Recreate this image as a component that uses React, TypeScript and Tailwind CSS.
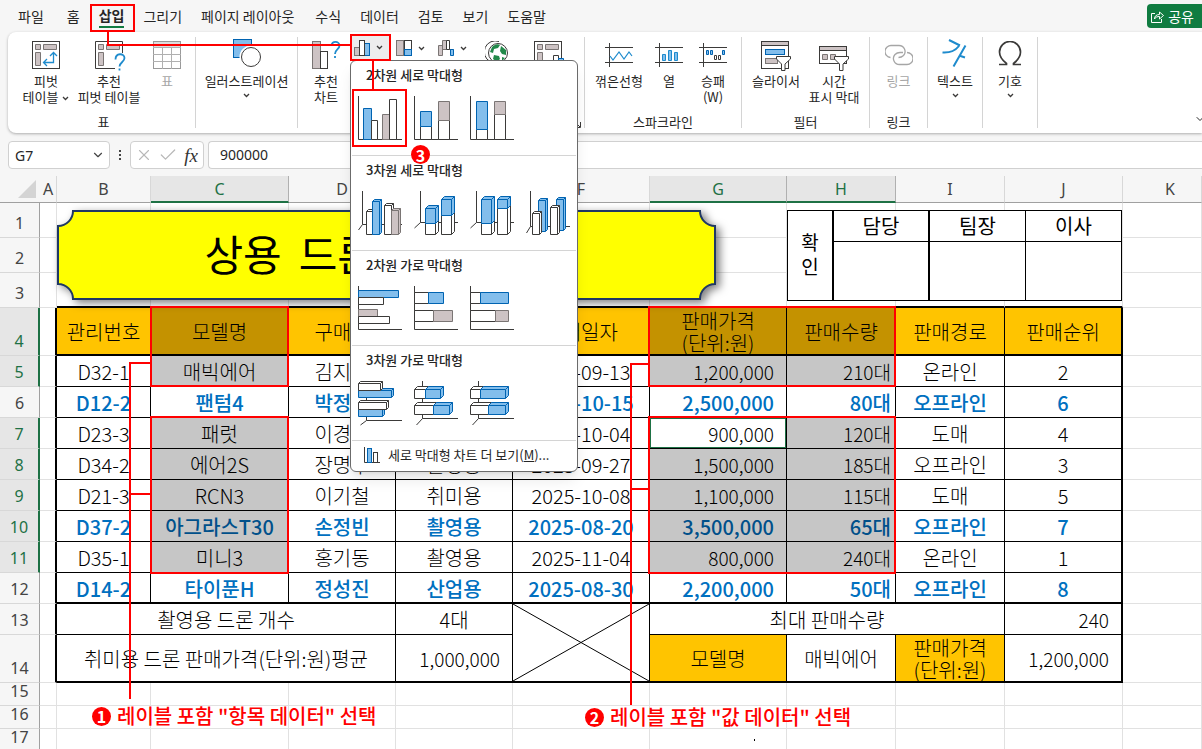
import type { ReactNode } from 'react'
import clsx from 'clsx'
import { Check, ChevronDown, X } from 'lucide-react'

const DARK = '#3b3a39'
const BLUE = '#0063b1'
const SKY = '#83beec'
const GRAY = '#cdc3c4'
const GRAY_LINE = '#7a7574'

type Tone = 'blue' | 'white' | 'gray'

const TONES: Record<Tone, { fill: string; stroke: string }> = {
  blue: { fill: SKY, stroke: BLUE },
  white: { fill: '#ffffff', stroke: DARK },
  gray: { fill: GRAY, stroke: GRAY_LINE },
}

// [x, y, width, height, tone]
type Bar = [number, number, number, number, Tone]

interface ChartIcon {
  label: string
  axis: string
  bars: Bar[]
  depth?: number
}

interface ChartSection {
  title: string
  icons: ChartIcon[]
}

const FLAT_AXIS = 'M0.5 0V43.5H44'

const CHART_SECTIONS: ChartSection[] = [
  {
    title: '2차원 세로 막대형',
    icons: [
      { label: '묶은 세로 막대형', axis: FLAT_AXIS, bars: [[5, 12, 8, 31, 'blue'], [13, 24, 6, 19, 'white'], [24, 18, 7, 25, 'gray'], [31, 3, 7, 40, 'white']] },
      { label: '누적 세로 막대형', axis: FLAT_AXIS, bars: [[6, 30, 11, 13, 'white'], [6, 15, 11, 15, 'blue'], [24, 24, 11, 19, 'white'], [24, 5, 11, 19, 'gray']] },
      { label: '100% 기준 누적 세로 막대형', axis: FLAT_AXIS, bars: [[6, 33, 11, 10, 'white'], [6, 5, 11, 28, 'blue'], [24, 18, 11, 25, 'white'], [24, 5, 11, 13, 'gray']] },
    ],
  },
  {
    title: '3차원 세로 막대형',
    icons: [
      { label: '3차원 묶은 세로 막대형', depth: 2, axis: 'M4.5 0V33.5H44M4.5 33.5L0.5 39', bars: [[8, 20, 6, 23, 'white'], [14, 10, 7, 33, 'blue'], [26, 14, 7, 29, 'white'], [33, 19, 7, 24, 'gray']] },
      { label: '3차원 누적 세로 막대형', depth: 3, axis: 'M6.5 0V31.5H44M6.5 31.5L0.5 37', bars: [[11, 32, 10, 11, 'white'], [11, 17, 10, 15, 'blue'], [27, 24, 10, 19, 'white'], [27, 8, 10, 16, 'blue']] },
      { label: '3차원 100% 기준 누적 세로 막대형', depth: 3, axis: 'M6.5 0V31.5H44M6.5 31.5L0.5 37', bars: [[11, 32, 10, 11, 'white'], [11, 8, 10, 24, 'blue'], [27, 17, 10, 26, 'white'], [27, 8, 10, 9, 'blue']] },
      { label: '3차원 세로 막대형', depth: 2, axis: 'M4.5 0V35.5H44M4.5 35.5L0.5 42', bars: [[12, 9, 7, 31, 'blue'], [6, 22, 7, 21, 'white'], [30, 8, 7, 31, 'blue'], [24, 16, 7, 27, 'white']] },
    ],
  },
  {
    title: '2차원 가로 막대형',
    icons: [
      { label: '묶은 가로 막대형', axis: FLAT_AXIS, bars: [[0, 4, 40, 7, 'blue'], [0, 11, 25, 7, 'white'], [0, 23, 19, 7, 'gray'], [0, 30, 31, 7, 'white']] },
      { label: '누적 가로 막대형', axis: FLAT_AXIS, bars: [[0, 6, 14, 11, 'white'], [14, 6, 15, 11, 'blue'], [0, 24, 19, 11, 'white'], [19, 24, 19, 11, 'gray']] },
      { label: '100% 기준 누적 가로 막대형', axis: FLAT_AXIS, bars: [[0, 6, 10, 11, 'white'], [10, 6, 28, 11, 'blue'], [0, 24, 25, 11, 'white'], [25, 24, 13, 11, 'gray']] },
    ],
  },
  {
    title: '3차원 가로 막대형',
    icons: [
      { label: '3차원 묶은 가로 막대형', depth: 2, axis: 'M8.5 0V39.5H44M8.5 39.5L2.5 44', bars: [[0, 28, 24, 7, 'blue'], [0, 21, 28, 7, 'white'], [0, 9, 33, 7, 'blue'], [0, 2, 22, 7, 'white']] },
      { label: '3차원 누적 가로 막대형', depth: 3, axis: 'M8.5 0V37.5H44M8.5 37.5L2.5 44', bars: [[0, 8, 11, 9, 'white'], [11, 8, 15, 9, 'blue'], [0, 24, 19, 9, 'white'], [19, 24, 16, 9, 'blue']] },
      { label: '3차원 100% 기준 누적 가로 막대형', depth: 3, axis: 'M8.5 0V37.5H44M8.5 37.5L2.5 44', bars: [[0, 8, 10, 9, 'white'], [10, 8, 25, 9, 'blue'], [0, 24, 18, 9, 'white'], [18, 24, 17, 9, 'blue']] },
    ],
  },
]

function ChartTile({ icon }: { icon: ChartIcon }) {
  const d = icon.depth ?? 0
  return (
    <svg width="44" height="44" viewBox="0 0 44 44" fill="none" className="overflow-visible">
      <path d={icon.axis} stroke={DARK} />
      {icon.bars.map(([x, y, w, h, tone], i) => {
        const { fill, stroke } = TONES[tone]
        const left = x + 0.5
        const top = y + 0.5
        return (
          <g key={i} fill={fill} stroke={stroke} strokeLinejoin="round">
            {d > 0 && <path d={`M${left} ${top}l${d} ${-d}h${w}v${h}l${-d} ${d}M${left + w} ${top}l${d} ${-d}`} />}
            <rect x={left} y={top} width={w} height={h} />
          </g>
        )
      })}
    </svg>
  )
}

function Caret({ className }: { className?: string }) {
  return (
    <svg width="7" height="5" viewBox="0 0 7 5" fill="none" stroke={DARK} strokeWidth="1.3" className={clsx('inline-block', className)}>
      <path d="M1 1l2.5 2.5L6 1" />
    </svg>
  )
}

/* ---------- ribbon icons ---------- */

const PivotIcon = () => (
  <svg width="28" height="28" viewBox="0 0 28 28" fill={GRAY} stroke={GRAY_LINE}>
    <rect x="0.5" y="0.5" width="27" height="27" fill="#fff" stroke={DARK} />
    <path d="M3.5 3.5h5v5h-5zM11.5 3.5h13v5h-13zM3.5 11.5h5v13h-5z" />
    <path d="M12 21.5h9.5V12M15 18l-3.5 3.5L15 25M18 15l3.5-3.5L25 15" fill="none" stroke="#1e8bcd" strokeWidth="1.3" />
  </svg>
)

const RecommendPivotIcon = () => (
  <svg width="28" height="28" viewBox="0 0 28 28" fill={GRAY} stroke={GRAY_LINE} className="overflow-visible">
    <path d="M20 27.5H0.5V0.5h27V12" fill="#fff" stroke={DARK} />
    <path d="M3.5 3.5h5v5h-5zM11.5 3.5h13v5h-13zM3.5 11.5h5v13h-5z" />
    <path d="M20.5 18.5c0-7 9-6.5 9-1.5 0 4-5 4.5-5 8.5M24.5 27.5v2" fill="none" stroke="#1e8bcd" strokeWidth="1.8" />
  </svg>
)

const TableIcon = () => (
  <svg width="28" height="28" viewBox="0 0 28 28" fill="none" stroke="#b0b0b0">
    <rect x="0.5" y="0.5" width="27" height="27" fill="#fff" stroke="#9a9a9a" />
    <rect x="1" y="1" width="26" height="5" fill="#dedede" stroke="none" />
    <path d="M0 6.5h28M0 13.5h28M0 20.5h28M9.5 6v22M18.5 6v22" />
  </svg>
)

const ShapesIcon = () => (
  <svg width="28" height="28" viewBox="0 0 28 28" className="overflow-visible">
    <rect x="0.5" y="-1.5" width="18" height="18" fill={SKY} stroke={BLUE} />
    <circle cx="18" cy="16" r="11.5" fill="#fff" />
    <circle cx="18" cy="16" r="9.5" fill="#fff" stroke={DARK} />
  </svg>
)

const RecommendChartIcon = () => (
  <svg width="28" height="28" viewBox="0 0 28 28" fill="none" className="overflow-visible">
    <rect x="0.5" y="0.5" width="8" height="27" fill={GRAY} stroke={GRAY_LINE} />
    <rect x="8.5" y="10.5" width="7" height="17" fill="#fff" stroke={DARK} />
    <path d="M19.5 5c0-6 8-5 8-0.5 0 4-4.5 4-4.5 8.5M23 15v2" stroke="#1e8bcd" strokeWidth="1.8" />
  </svg>
)

const ColumnSmallIcon = () => (
  <svg width="16" height="16" viewBox="0 0 16 16">
    <rect x="0.5" y="7.5" width="5" height="8" fill={GRAY} stroke={GRAY_LINE} />
    <rect x="10.5" y="3.5" width="5" height="12" fill={SKY} stroke={BLUE} />
    <rect x="5.5" y="0.5" width="5" height="15" fill="#fff" stroke={DARK} />
  </svg>
)

const TreemapSmallIcon = () => (
  <svg width="16" height="16" viewBox="0 0 16 16">
    <rect x="8.5" y="0.5" width="7" height="9" fill="#fff" stroke={DARK} />
    <rect x="0.5" y="0.5" width="7" height="15" fill={GRAY} stroke={GRAY_LINE} />
    <rect x="8.5" y="9.5" width="7" height="6" fill={SKY} stroke={BLUE} />
  </svg>
)

const WaterfallSmallIcon = () => (
  <svg width="16" height="16" viewBox="0 0 16 16">
    <path d="M0.5 5.5h4v10h-4zM4.5 0.5h4v9h-4z" fill={GRAY} stroke={GRAY_LINE} />
    <path d="M8.5 0.5h3v9h-3z" fill="#fff" stroke={DARK} />
    <path d="M11.5 9.5h4" stroke={DARK} />
    <path d="M12.5 9.5h3v6h-3z" fill={SKY} stroke={BLUE} />
  </svg>
)

const GlobeIcon = () => (
  <svg width="24" height="28" viewBox="0 0 24 28" fill="none">
    <path d="M14 0.5a11 11 0 0 0-9 20" stroke={DARK} />
    <circle cx="13" cy="12" r="9.5" fill="#fff" stroke={DARK} />
    <path d="M7 6c3-3 6-3.5 8-2l-2 3-4 1-1 4-3-1zM16 5l5 4v5l-4-1-2-3zM9 14l5 1 1 3-3 3-4-3zM17 16l3 1-3 3z" fill="#22894a" />
  </svg>
)

const PivotChartIcon = () => (
  <svg width="30" height="28" viewBox="0 0 30 28" fill={GRAY} stroke={GRAY_LINE}>
    <rect x="0.5" y="0.5" width="27" height="27" fill="#fff" stroke={DARK} />
    <path d="M3.5 3.5h5v5h-5zM11.5 3.5h13v5h-13zM3.5 11.5h5v13h-5z" />
    <path d="M19.5 14.5h5v12h-5z" fill="#fff" stroke={DARK} />
    <path d="M24.5 17.5h5v9h-5z" fill={SKY} stroke={BLUE} />
  </svg>
)

const SparkFrame = ({ children }: { children: ReactNode }) => (
  <svg width="28" height="28" viewBox="0 0 28 28" fill="none">
    <path d="M0 6.5h28M0 21.5h28M4.5 2v24" stroke={DARK} />
    {children}
  </svg>
)

const SparkLineIcon = () => (
  <SparkFrame>
    <path d="M5 15l3 4 6-8 5 7 5-7 3 4" stroke="#1e8bcd" strokeWidth="1.2" />
  </SparkFrame>
)

const SparkColumnIcon = () => (
  <SparkFrame>
    <path d="M7.5 13.5h3v6h-3zM13.5 9.5h3v10h-3zM19.5 11.5h3v8h-3z" fill={SKY} stroke="#1e8bcd" />
  </SparkFrame>
)

const SparkWinIcon = () => (
  <SparkFrame>
    <path d="M7.5 9.5h2v4h-2zM11.5 9.5h2v4h-2zM23.5 9.5h2v4h-2z" fill={SKY} stroke={BLUE} />
    <path d="M15.5 14.5h2v4h-2zM19.5 14.5h2v4h-2z" fill="#fff" stroke={DARK} />
  </SparkFrame>
)

const SlicerIcon = () => (
  <svg width="30" height="30" viewBox="0 0 30 30" className="overflow-visible">
    <rect x="0.5" y="0.5" width="27" height="27" fill="#fff" stroke={DARK} />
    <rect x="0.5" y="0.5" width="27" height="4" fill={GRAY} stroke={DARK} />
    <rect x="4.5" y="8.5" width="19" height="5" fill={SKY} stroke={BLUE} />
    <rect x="4.5" y="17.5" width="12" height="5" fill={GRAY} stroke={GRAY_LINE} />
    <path d="M15.5 15.5h14v2.5l-5.5 5v6.5h-3.500V23l-5-5z" fill="#fff" stroke={DARK} />
  </svg>
)

const TimelineIcon = () => (
  <svg width="30" height="30" viewBox="0 0 30 30" className="overflow-visible">
    <rect x="0.5" y="5.5" width="27" height="17" fill="#fff" stroke={DARK} />
    <rect x="0.5" y="5.5" width="27" height="4" fill={GRAY} stroke={DARK} />
    <path d="M3.5 13.5h5v5h-5zM11.5 13.5h5v5h-5z" fill={GRAY} stroke={GRAY_LINE} />
    <path d="M15.5 15.5h14v2.5l-5.5 5v6.5h-3.500V23l-5-5z" fill="#fff" stroke={DARK} />
  </svg>
)

const LinkIcon = () => (
  <svg width="28" height="28" viewBox="0 0 28 28" fill="none" stroke="#a6a6a6" strokeWidth="1.3">
    <path d="M5.500 16.500a6 6 0 0 1 1-12h7.500a6 6 0 0 1 4.500 10q-2 2-5 2" />
    <path d="M22 11.500a6 6 0 0 1 0 12h-7.500a6 6 0 0 1-4.500-10q2-2 5-2h3" />
  </svg>
)

const TextIcon = () => (
  <svg width="28" height="28" viewBox="0 0 28 28" fill="none" stroke="#1e8bcd" strokeWidth="2" className="overflow-visible">
    <path d="M8 -1l11 5.5M18 5C14 10 9 12 1.5 11.5M24.5 4.500L12.5 25.5M18 14.5l6 2" />
  </svg>
)

const OmegaIcon = () => (
  <svg width="28" height="28" viewBox="0 0 28 28" fill="none" stroke={DARK} strokeWidth="1.7">
    <path d="M3 23.5h7.5v-1C6 19 3.500 16 3.500 11a10.500 10.500 0 0 1 21 0c0 5-2.500 8-7 11.500v1H25" />
  </svg>
)

/* ---------- ribbon ---------- */

interface ToolProps {
  icon: ReactNode
  lines: string[]
  className: string
  caret?: 'inline' | 'below'
  disabled?: boolean
}

function Tool({ icon, lines, className, caret, disabled }: ToolProps) {
  return (
    <button type="button" disabled={disabled} className={clsx('flex flex-col items-center text-[13px] leading-4 whitespace-nowrap', disabled && 'text-[#a6a6a6]', className)}>
      <span className="mb-1 flex h-7 justify-center">{icon}</span>
      {lines.map((line, i) => (
        <span key={line}>
          {line}
          {caret === 'inline' && i === lines.length - 1 && <Caret className="ml-1 align-middle" />}
        </span>
      ))}
      {caret === 'below' && <Caret className="mt-1" />}
    </button>
  )
}

function Group({ label, className, children }: { label?: string; className: string; children: ReactNode }) {
  return (
    <div className={clsx('flex h-[91px] shrink-0 flex-col justify-between border-r border-[#d4d4d4] pt-1', className)}>
      <div className="flex items-start">{children}</div>
      {label && <div className="text-center text-[13px] leading-3">{label}</div>}
    </div>
  )
}

function ChartMenu() {
  return (
    <div role="menu" className="absolute top-[26px] left-0 z-20 w-[228px] rounded-md border border-[#6b6b6b] bg-white shadow-lg">
      {CHART_SECTIONS.map((section) => (
        <section key={section.title} className="mx-px border-b border-[#d4d4d4] pb-2">
          <h3 className="pl-3.5 text-[13px] leading-7 font-medium">{section.title}</h3>
          <div className="flex">
            {section.icons.map((icon) => (
              <button key={icon.label} type="button" role="menuitem" aria-label={icon.label} className="flex h-[58px] w-14 items-center justify-center">
                <ChartTile icon={icon} />
              </button>
            ))}
          </div>
        </section>
      ))}
      <button type="button" role="menuitem" className="flex h-[30px] w-full items-center gap-2 pb-0.5 pl-3 text-[13px]">
        <svg width="17" height="17" viewBox="0 0 17 17" fill="none">
          <path d="M1.5 0v15.5H17" stroke={DARK} />
          <rect x="4.5" y="1.5" width="4" height="14" fill={SKY} stroke={BLUE} />
          <rect x="10.5" y="5.5" width="4" height="10" fill="#fff" stroke={DARK} />
        </svg>
        <span>
          세로 막대형 차트 더 보기(<u>M</u>)...
        </span>
      </button>
    </div>
  )
}

const TABS = ['파일', '홈', '삽입', '그리기', '페이지 레이아웃', '수식', '데이터', '검토', '보기', '도움말']

function TabBar() {
  return (
    <nav className="flex h-8 items-center overflow-hidden pl-[18px] text-[14px] whitespace-nowrap">
      <div className="flex items-center gap-[19px]">
        {TABS.map((tab) => (
          <button
            key={tab}
            type="button"
            className={clsx('h-6 shrink-0', tab === '홈' && 'ml-1', tab === '수식' && 'ml-0.5', tab === '삽입' && 'border-b-2 border-[#107c41] font-bold')}
          >
            {tab}
          </button>
        ))}
      </div>
      <button type="button" className="-mr-[18px] ml-auto flex h-6 shrink-0 items-center gap-1 rounded bg-[#107c41] pr-2 pl-1 text-white">
        <svg width="13" height="13" viewBox="0 0 13 13" fill="none" stroke="currentColor">
          <path d="M4 3.5H0.5v9h10V9M3.5 9c0-3 2-4.5 5-4.5V2L12.5 5.5 8.5 9V6.5c-2 0-4 .5-5 2.5z" />
        </svg>
        공유
        <ChevronDown size={10} className="ml-1" />
      </button>
    </nav>
  )
}

function Ribbon() {
  return (
    <div className="relative z-10 ml-2 flex h-[101px] rounded-l-lg bg-white pt-[5px] shadow-[0_1px_3px_rgba(0,0,0,0.3)]">
      <Group label="표" className="w-[188px] pl-1">
        <Tool icon={<PivotIcon />} lines={['피벗', '테이블']} caret="inline" className="ml-1 w-[60px]" />
        <Tool icon={<RecommendPivotIcon />} lines={['추천', '피벗 테이블']} className="w-[66px]" />
        <Tool icon={<TableIcon />} lines={['표']} disabled className="w-[50px]" />
      </Group>
      <Group className="w-[102px]">
        <Tool icon={<ShapesIcon />} lines={['일러스트레이션']} caret="below" className="w-full" />
      </Group>
      <Group className="relative w-[287px]">
        <Tool icon={<RecommendChartIcon />} lines={['추천', '차트']} className="ml-1 w-12" />
        <div className="relative -mt-[7px]">
          <button type="button" aria-expanded="true" aria-label="세로 또는 가로 막대형 차트 삽입" className="flex h-[27px] w-[41px] items-center gap-1.5 rounded bg-[#ededed] pl-1">
            <ColumnSmallIcon />
            <Caret />
          </button>
          <ChartMenu />
        </div>
        <button type="button" aria-label="계층 구조 차트 삽입" className="-mt-px flex w-[42px] items-center gap-1.5 pl-[5px]">
          <TreemapSmallIcon />
          <Caret />
        </button>
        <button type="button" aria-label="폭포 차트 삽입" className="-mt-px flex w-[42px] items-center gap-1.5 pl-[5px]">
          <WaterfallSmallIcon />
          <Caret />
        </button>
        <button type="button" aria-label="지도" className="ml-2.5">
          <GlobeIcon />
        </button>
        <button type="button" aria-label="피벗 차트" className="ml-[25px]">
          <PivotChartIcon />
        </button>
        <svg width="6" height="6" viewBox="0 0 6 6" fill="none" stroke={DARK} className="absolute right-[3px] bottom-0">
          <path d="M0 0l5 5M5.500 0v5.500H1" />
        </svg>
      </Group>
      <Group label="스파크라인" className="w-[157px]">
        <Tool icon={<SparkLineIcon />} lines={['꺾은선형']} className="ml-2 w-[52px]" />
        <Tool icon={<SparkColumnIcon />} lines={['열']} className="w-[48px]" />
        <Tool icon={<SparkWinIcon />} lines={['승패', '(W)']} className="w-[40px]" />
      </Group>
      <Group label="필터" className="w-[128px]">
        <Tool icon={<SlicerIcon />} lines={['슬라이서']} className="ml-1 w-[60px]" />
        <Tool icon={<TimelineIcon />} lines={['시간', '표시 막대']} className="w-[56px]" />
      </Group>
      <Group label="링크" className="w-[58px]">
        <Tool icon={<LinkIcon />} lines={['링크']} disabled className="w-full" />
      </Group>
      <Group className="w-[55px]">
        <Tool icon={<TextIcon />} lines={['텍스트']} caret="below" className="w-full" />
      </Group>
      <Group className="w-[55px]">
        <Tool icon={<OmegaIcon />} lines={['기호']} caret="below" className="w-full" />
      </Group>
      <button type="button" aria-label="리본 메뉴 축소" className="-mr-1 mb-2 ml-auto self-end">
        <ChevronDown size={12} />
      </button>
    </div>
  )
}

function FormulaBar() {
  return (
    <div className="mt-2 flex h-7 items-stretch pl-2 font-['Noto_Sans','Noto_Sans_CJK_KR',sans-serif] text-[14px]">
      <div className="flex w-[102px] items-center rounded border border-[#d0d0d0] bg-white pr-1">
        <input aria-label="이름 상자" defaultValue="G7" className="w-0 flex-1 pl-1.5 outline-none" />
        <ChevronDown size={14} className="text-[#444]" />
      </div>
      <div className="flex w-5 flex-col items-center justify-center gap-0.5">
        <i className="size-0.5 bg-[#444]" />
        <i className="size-0.5 bg-[#444]" />
        <i className="size-0.5 bg-[#444]" />
      </div>
      <div className="flex w-[74px] items-center justify-between rounded border border-[#d0d0d0] bg-white px-1">
        <button type="button" aria-label="취소" className="text-[#b8b8b8]">
          <X size={18} strokeWidth={1.5} />
        </button>
        <button type="button" aria-label="입력" className="text-[#b8b8b8]">
          <Check size={20} strokeWidth={1.5} />
        </button>
        <button type="button" aria-label="함수 삽입" className="w-4 font-['Liberation_Serif',serif] text-[19px] leading-none text-[#333] italic">
          fx
        </button>
      </div>
      <input aria-label="수식 입력줄" defaultValue="900000" className="ml-1 min-w-0 flex-1 rounded-l border border-r-0 border-[#d0d0d0] bg-white pb-0.5 pl-[11px] outline-none" />
    </div>
  )
}

/* ---------- sheet ---------- */

const COLUMNS = ['A', 'B', 'C', 'D', 'E', 'F', 'G', 'H', 'I', 'J', 'K']
const COL_WIDTHS = ['w-[17px]', 'w-[94px]', 'w-[138px]', 'w-[107px]', 'w-[117px]', 'w-[137px]', 'w-[137px]', 'w-[109px]', 'w-[109px]', 'w-[118px]', '']
const SELECTED_COLS = ['C', 'G', 'H']
const SELECTED_ROWS = [4, 5, 7, 8, 9, 10, 11]

const HEADERS = ['관리번호', '모델명', '구매자', '구매목적', '구매일자', '판매가격\n(단위:원)', '판매수량', '판매경로', '판매순위']

interface Sale {
  row: number
  cells: string[]
  bold?: boolean
}

const SALES: Sale[] = [
  { row: 5, cells: ['D32-1', '매빅에어', '김지수', '산업용', '2025-09-13', '1,200,000', '210대', '온라인', '2'] },
  { row: 6, cells: ['D12-2', '팬텀4', '박정우', '촬영용', '2025-10-15', '2,500,000', '80대', '오프라인', '6'], bold: true },
  { row: 7, cells: ['D23-3', '패럿', '이경민', '취미용', '2025-10-04', '900,000', '120대', '도매', '4'] },
  { row: 8, cells: ['D34-2', '에어2S', '장명수', '촬영용', '2025-09-27', '1,500,000', '185대', '오프라인', '3'] },
  { row: 9, cells: ['D21-3', 'RCN3', '이기철', '취미용', '2025-10-08', '1,100,000', '115대', '도매', '5'] },
  { row: 10, cells: ['D37-2', '아그라스T30', '손정빈', '촬영용', '2025-08-20', '3,500,000', '65대', '오프라인', '7'], bold: true },
  { row: 11, cells: ['D35-1', '미니3', '홍기동', '촬영용', '2025-11-04', '800,000', '240대', '온라인', '1'] },
  { row: 12, cells: ['D14-2', '타이푼H', '정성진', '산업용', '2025-08-30', '2,200,000', '50대', '오프라인', '8'], bold: true },
]

function RowHead({ n }: { n: number }) {
  const selected = SELECTED_ROWS.includes(n)
  return (
    <th
      scope="row"
      className={clsx(
        "border-b border-b-[#d8d8d8] pb-1.5 align-bottom font-['Noto_Sans',sans-serif] text-[16px] leading-4 font-normal",
        selected ? 'border-r-2 border-r-[#1e7145] bg-[#e6e6e6] text-[#1e7145]' : 'border-r border-r-[#a0a0a0] bg-[#f6f6f6] text-[#444]',
      )}
    >
      {n}
    </th>
  )
}

const GRID = 'border-r border-b border-[#e1e1e1]'

function EmptyRow({ n, height, closing }: { n: number; height: string; closing?: boolean }) {
  return (
    <tr className={height}>
      <RowHead n={n} />
      {COLUMNS.map((c) => (
        <td key={c} className={clsx(GRID, closing && c !== 'A' && c !== 'K' && 'border-b-2 border-b-black')} />
      ))}
    </tr>
  )
}

// A ends with the thick left edge of the data block
const EdgeCell = () => <td className="border-r-2 border-b border-r-black border-b-[#e1e1e1]" />

function SaleRow({ sale }: { sale: Sale }) {
  const rowSelected = SELECTED_ROWS.includes(sale.row)
  return (
    <tr className="h-[31px]">
      <RowHead n={sale.row} />
      <EdgeCell />
      {sale.cells.map((text, i) => {
        const col = COLUMNS[i + 1]
        const active = col === 'G' && sale.row === 7
        const selected = rowSelected && SELECTED_COLS.includes(col) && !active
        const numeric = col === 'G' || col === 'H'
        return (
          <td
            key={col}
            className={clsx(
              'border-black pt-0.5',
              sale.row === 12 ? 'border-b-2' : 'border-b',
              col === 'J' ? 'border-r-2' : 'border-r',
              col === 'G' && 'pr-3',
              col === 'H' && 'pr-1',
              numeric && 'text-right',
              numeric && !sale.bold && 'text-[19px]',
              selected ? 'bg-[#c6c6c6]' : 'bg-white',
              sale.bold && 'font-medium',
              sale.bold && (selected ? 'text-[#00508a]' : 'text-[#0070c0]'),
              active && 'shadow-[inset_0_0_0_1px_#1e7145]',
            )}
          >
            {text}
          </td>
        )
      })}
      <td className={GRID} />
    </tr>
  )
}

function Plaque() {
  return (
    <div className="absolute top-[34px] left-[57px] h-[90px] w-[659px]">
      <svg viewBox="0 0 659 90" className="absolute inset-0 size-full overflow-visible drop-shadow-[4px_3px_4px_rgba(0,0,0,0.5)]">
        <path d="M16 1H643A15 15 0 0 0 658 16V74A15 15 0 0 0 643 89H16A15 15 0 0 0 1 74V16A15 15 0 0 0 16 1Z" fill="#ffff00" stroke="#1f3864" strokeWidth="2" />
      </svg>
      <h1 className="relative flex h-full items-center justify-center gap-[17px] pr-1 pb-1 text-[42px] leading-none font-normal text-black">
        <span>상용</span>
        <span>드론</span>
        <span>판매</span>
        <span>현황</span>
      </h1>
    </div>
  )
}

function Approval() {
  return (
    <table className="absolute top-[34px] left-[787px] w-[335px] table-fixed border-separate border-spacing-0 border-t border-l border-black bg-white text-center text-[20px] text-black">
      <tbody>
        <tr className="h-[31px]">
          <th rowSpan={2} className="w-[46px] border-r-2 border-b border-black px-2 pb-1 text-[19px] leading-6 font-normal">
            확 인
          </th>
          <th className="border-r-2 border-b border-black font-normal">담당</th>
          <th className="border-r border-b border-black font-normal">팀장</th>
          <th className="border-r border-b border-black font-normal">이사</th>
        </tr>
        <tr className="h-[59px]">
          <td className="border-r-2 border-b border-black" />
          <td className="border-r border-b border-black" />
          <td className="border-r border-b border-black" />
        </tr>
      </tbody>
    </table>
  )
}

function Sheet() {
  return (
    <main className="relative mt-[7px] min-h-0 flex-1 overflow-hidden">
      <table className="w-full table-fixed border-separate border-spacing-0 bg-white text-center text-[20px] leading-[22px] font-light whitespace-nowrap text-black">
        <colgroup>
          <col className="w-10" />
          {COLUMNS.map((c, i) => (
            <col key={c} className={COL_WIDTHS[i]} />
          ))}
        </colgroup>
        <thead>
          <tr className="h-[27px] bg-[#f6f6f6] font-['Noto_Sans',sans-serif] text-[16px]">
            <th className="border-b border-[#a0a0a0]">
              <svg width="18" height="18" viewBox="0 0 18 18" className="ml-[18px]">
                <path d="M18 0v18H0z" fill="#d4d4d4" />
              </svg>
            </th>
            {COLUMNS.map((c) => (
              <th
                key={c}
                scope="col"
                className={clsx(
                  'border-r font-normal',
                  c === 'K' && 'pl-4',
                  SELECTED_COLS.includes(c) ? 'border-b-2 border-r-[#b0b0b0] border-b-[#1e7145] bg-[#e6e6e6] text-[#1e7145]' : 'border-b border-r-[#d8d8d8] border-b-[#a0a0a0] text-[#444]',
                )}
              >
                {c}
              </th>
            ))}
          </tr>
        </thead>
        <tbody>
          <EmptyRow n={1} height="h-[35px]" />
          <EmptyRow n={2} height="h-[35px]" />
          <EmptyRow n={3} height="h-[35px]" closing />
          <tr className="h-12">
            <RowHead n={4} />
            <EdgeCell />
            {HEADERS.map((text, i) => {
              const col = COLUMNS[i + 1]
              return (
                <th
                  key={text}
                  scope="col"
                  className={clsx(
                    'border-b-2 border-black pt-0.5 font-light whitespace-pre',
                    col === 'J' ? 'border-r-2' : 'border-r',
                    SELECTED_COLS.includes(col) ? 'bg-[#c49200]' : 'bg-[#ffc400]',
                  )}
                >
                  {text}
                </th>
              )
            })}
            <td className={GRID} />
          </tr>
          {SALES.map((sale) => (
            <SaleRow key={sale.row} sale={sale} />
          ))}
          <tr className="h-[31px]">
            <RowHead n={13} />
            <EdgeCell />
            <td colSpan={3} className="border-r border-b border-black pt-0.5">촬영용 드론 개수</td>
            <td className="border-r border-b border-black pt-0.5">4대</td>
            <td rowSpan={2} className="relative border-r border-b-2 border-black">
              <svg viewBox="0 0 100 100" preserveAspectRatio="none" className="absolute inset-0 size-full">
                <path d="M0 0L100 100M0 100L100 0" stroke="#000" vectorEffect="non-scaling-stroke" />
              </svg>
            </td>
            <td colSpan={3} className="border-r border-b border-black pt-0.5">최대 판매수량</td>
            <td className="border-r-2 border-b border-black pt-0.5 pr-3 text-right text-[19px]">240</td>
            <td className={GRID} />
          </tr>
          <tr className="h-12">
            <RowHead n={14} />
            <EdgeCell />
            <td colSpan={3} className="border-r border-b-2 border-black pt-0.5">취미용 드론 판매가격(단위:원)평균</td>
            <td className="border-r border-b-2 border-black pt-0.5 pr-3 text-right text-[19px]">1,000,000</td>
            <td className="border-r border-b-2 border-black bg-[#ffc400] pt-0.5">모델명</td>
            <td className="border-r border-b-2 border-black pt-0.5">매빅에어</td>
            <td className="border-r border-b-2 border-black bg-[#ffc400] pt-0.5 whitespace-pre">{'판매가격\n(단위:원)'}</td>
            <td className="border-r-2 border-b-2 border-black pt-0.5 pr-3 text-right text-[19px]">1,200,000</td>
            <td className={GRID} />
          </tr>
          <EmptyRow n={15} height="h-[23px]" />
          <EmptyRow n={16} height="h-[23px]" />
          <EmptyRow n={17} height="h-[23px]" />
        </tbody>
      </table>
      <Plaque />
      <Approval />
    </main>
  )
}

/* ---------- callouts drawn over the window ---------- */

const FRAMES = [
  'top-1 left-[90px] h-7 w-[45px]',
  'top-[34px] left-[350px] h-[27px] w-[41px]',
  'top-[89px] left-[352px] h-[58px] w-[55px]',
  'top-[306px] left-[150px] h-[81px] w-[139px]',
  'top-[416px] left-[150px] h-[158px] w-[139px]',
  'top-[306px] left-[648px] h-[81px] w-[248px]',
  'top-[416px] left-[648px] h-[158px] w-[248px]',
]

const LINES = [
  'top-8 left-[107px] h-3 w-0.5',
  'top-11 left-[107px] h-0.5 w-[243px]',
  'top-[61px] left-[372px] h-[29px] w-0.5',
  'top-[362px] left-[129px] h-[337px] w-0.5',
  'top-[362px] left-[129px] h-0.5 w-[21px]',
  'top-[493px] left-[129px] h-0.5 w-[21px]',
  'top-[363px] left-[630px] h-[342px] w-0.5',
  'top-[363px] left-[630px] h-0.5 w-[19px]',
  'top-[488px] left-[630px] h-0.5 w-[19px]',
]

function Badge({ n }: { n: number }) {
  return <span className="flex size-[19px] items-center justify-center rounded-full bg-[#f00] text-[16px] leading-none font-bold text-white">{n}</span>
}

function Callouts() {
  return (
    <div className="pointer-events-none absolute inset-0 z-30">
      {FRAMES.map((pos) => (
        <div key={pos} className={clsx('absolute border-2 border-[#f00]', pos)} />
      ))}
      {LINES.map((pos) => (
        <div key={pos} className={clsx('absolute bg-[#f00]', pos)} />
      ))}
      <div className="absolute top-[145px] left-[411px]">
        <Badge n={3} />
      </div>
      <p className="absolute top-[704px] left-[92px] flex items-center gap-1.5 text-[20px] leading-6 font-medium whitespace-nowrap text-[#f00]">
        <Badge n={1} />
        레이블 포함 "항목 데이터" 선택
      </p>
      <p className="absolute top-[705px] left-[585px] flex items-center gap-1.5 text-[20px] leading-6 font-medium whitespace-nowrap text-[#f00]">
        <Badge n={2} />
        레이블 포함 "값 데이터" 선택
      </p>
      <i className="absolute top-[739px] left-[754px] h-0.5 w-px bg-black" />
    </div>
  )
}

export default function App() {
  return (
    <div className="relative flex h-screen flex-col overflow-hidden bg-[#f6f6f6] font-['Noto_Sans_CJK_KR',sans-serif] text-[#262626]">
      <TabBar />
      <Ribbon />
      <FormulaBar />
      <Sheet />
      <Callouts />
    </div>
  )
}
